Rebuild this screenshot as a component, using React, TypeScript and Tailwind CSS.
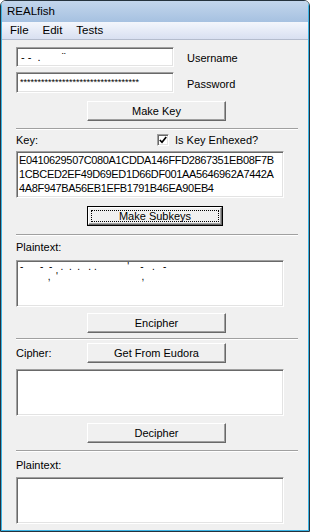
import React from "react";

const sunken =
  "bg-white border border-t-[#a0a0a0] border-l-[#a0a0a0] border-r-white border-b-white shadow-[inset_1px_1px_0_#696969,inset_-1px_-1px_0_#e3e3e3]";
const raised =
  "bg-[#f0f0f0] border border-t-white border-l-white border-r-[#696969] border-b-[#696969] shadow-[inset_-1px_-1px_0_#a0a0a0]";

function Btn({ label, cls = "", focus = false }: { label: string; cls?: string; focus?: boolean }) {
  if (focus) {
    return (
      <div className={"ml-[71px] w-[136px] h-[20px] border border-black " + cls}>
        <div className={raised + " w-full h-full p-[2px]"}>
          <div className="w-full h-full border border-dotted border-black flex items-center justify-center leading-none">
            {label}
          </div>
        </div>
      </div>
    );
  }
  return (
    <div className={raised + " ml-[71px] w-[139px] h-[20px] flex items-center justify-center leading-none " + cls}>
      {label}
    </div>
  );
}

const Sep = ({ cls = "" }: { cls?: string }) => (
  <div className={"w-[282px] h-[2px] border-t border-t-[#a0a0a0] border-b border-b-white " + cls} />
);

const Box = ({ cls = "", children }: { cls?: string; children?: React.ReactNode }) => (
  <div className={sunken + " w-[268px] h-[47px] " + cls}>{children}</div>
);

export default function App() {
  return (
    <div className="w-[310px] h-[532px] border border-[#25323d] rounded-t-[6px] overflow-hidden font-['Liberation_Sans',Arial,sans-serif] text-[11px] text-black">
      <div className="h-full border-x border-b border-[#3cb4e4] flex flex-col bg-[#f0f0f0]">
        <div className="h-[21px] bg-gradient-to-b from-[#c3d6ec] to-[#a6c1e1] pl-[5px] pt-[5px] text-[11.5px] leading-none text-black">
          REALfish
        </div>
        <div className="h-[18px] bg-gradient-to-b from-[#f3f6fc] to-[#d9e0f1] border-b border-[#b4bccd] flex items-center text-[11.5px] leading-none pl-[8px] gap-[14px]">
          <span>File</span>
          <span>Edit</span>
          <span>Tests</span>
        </div>

        <div className="flex-1 pl-[14px] flex flex-col">
          <div className="mt-[7px] flex items-center">
            <div className={sunken + " w-[158px] h-[20px] flex items-center pl-[4px] whitespace-pre leading-none"}>
              {"- -  .       ¨"}
            </div>
            <span className="ml-[13px] mt-[2px]">Username</span>
          </div>
          <div className="mt-[5px] flex items-center">
            <div className={sunken + " w-[158px] h-[21px] flex items-center pl-[3px] leading-none text-[9px] overflow-hidden"}>
              {"*".repeat(34)}
            </div>
            <span className="ml-[13px] mt-[3px]">Password</span>
          </div>
          <Btn label="Make Key" cls="mt-[8px]" />
          <Sep cls="mt-[7px]" />

          <div className="mt-[3px] h-[14px] flex items-center">
            <span className="w-[141px]">Key:</span>
            <div className={sunken + " w-[12px] h-[12px] flex items-center justify-center"}>
              <svg width="8" height="8" viewBox="0 0 8 8">
                <path d="M0.8 4 L3 6.3 L7.2 1" stroke="#000" strokeWidth="1.7" fill="none" />
              </svg>
            </div>
            <span className="ml-[6px]">Is Key Enhexed?</span>
          </div>
          <Box cls="mt-[4px] pl-[2px] pt-[1px] leading-[14px] whitespace-pre tracking-[-0.35px]">
            {"E0410629507C080A1CDDA146FFD2867351EB08F7B\n1CBCED2EF49D69ED1D66DF001AA5646962A7442A\n4A8F947BA56EB1EFB1791B46EA90EB4"}
          </Box>
          <Btn label="Make Subkeys" focus cls="mt-[8px]" />
          <div className="mt-[8px] w-[282px] flex justify-between">
            <Sep cls="w-[93px]" />
            <Sep cls="w-[96px]" />
          </div>

          <div className="mt-[6px] leading-none h-[11px]">Plaintext:</div>
          <Box cls="mt-[7px] pl-[3px] pt-[1px] leading-[10px] whitespace-pre text-black text-[10px] overflow-hidden">
            {"-      -  -   .  .  .   . .           '    -   .   -\n          ,  '                              ,"}
          </Box>
          <Btn label="Encipher" cls="mt-[6px]" />
          <Sep cls="mt-[5px]" />

          <div className="mt-[3px] flex items-center">
            <span className="w-[71px]">Cipher:</span>
            <Btn label="Get From Eudora" cls="!ml-0" />
          </div>
          <Box cls="mt-[6px]" />
          <Btn label="Decipher" cls="mt-[7px] h-[19px]" />
          <Sep cls="mt-[7px]" />
          <div className="mt-[8px] leading-none h-[11px]">Plaintext:</div>
          <Box cls="mt-[6px]" />
        </div>
      </div>
    </div>
  );
}
